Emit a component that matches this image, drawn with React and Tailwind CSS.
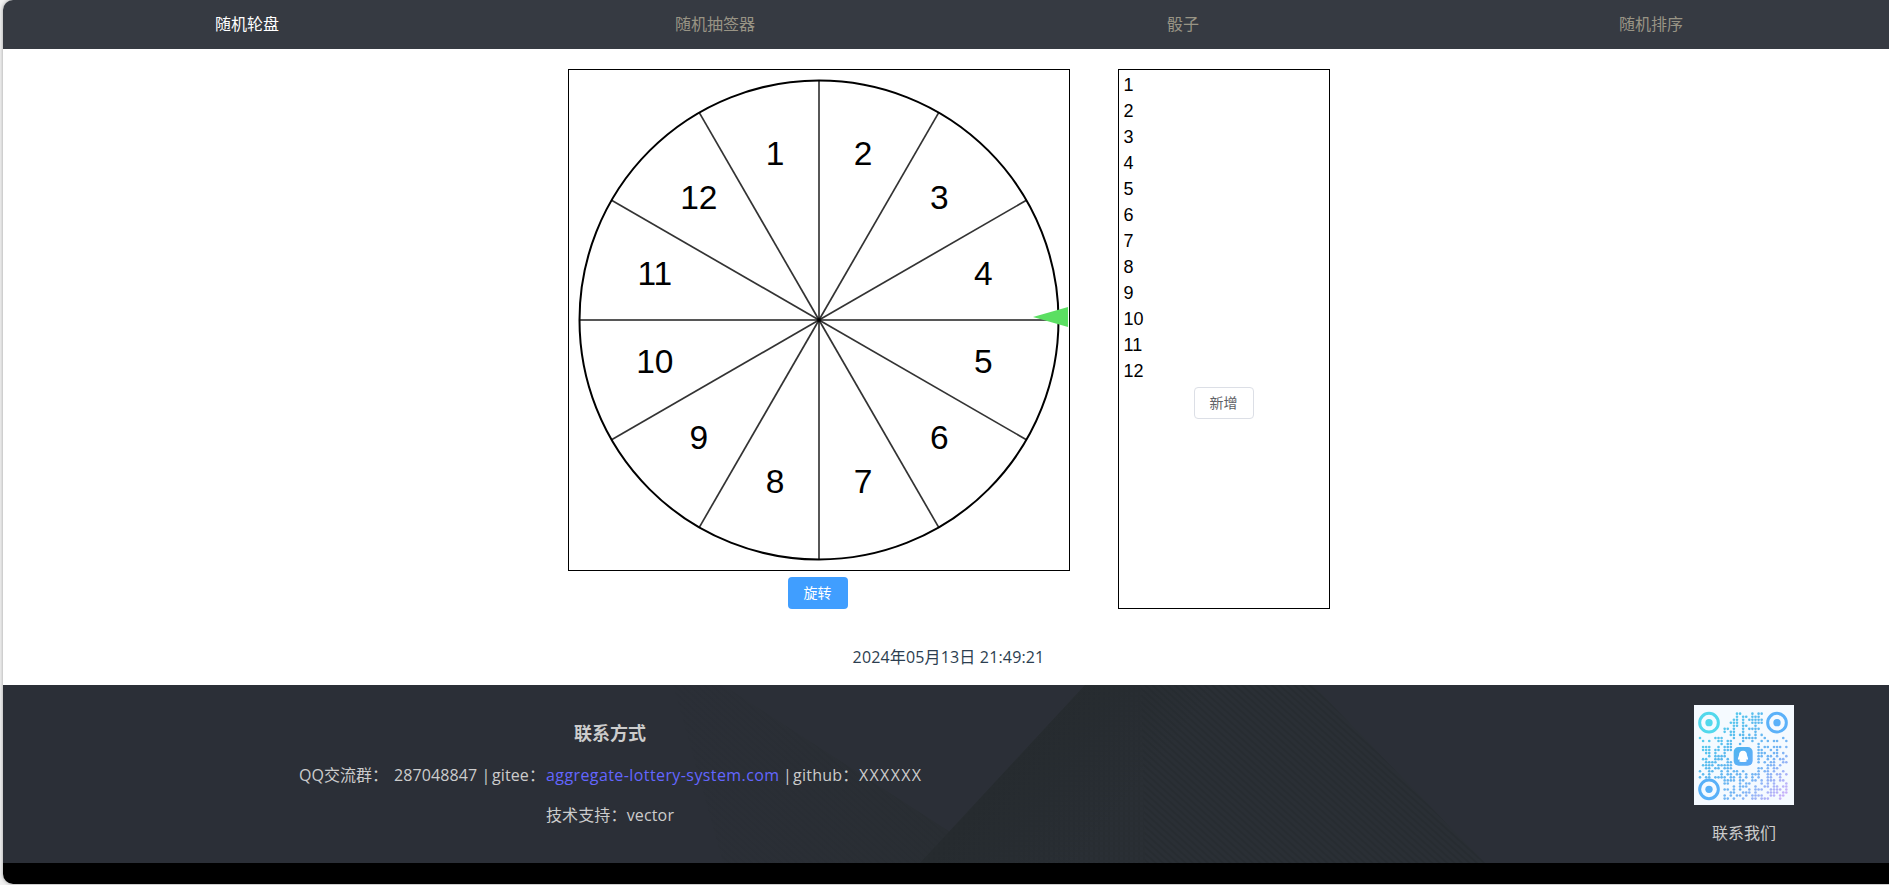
import React from "react";

const NAV = ["随机轮盘", "随机抽签器", "骰子", "随机排序"];
const ITEMS = Array.from({ length: 12 }, (_, i) => String(i + 1));

function Wheel() {
  const c = 250;
  const rad = (deg) => (deg * Math.PI) / 180;
  return (
    <svg viewBox="0 0 500 500" className="block h-[500px] w-[500px]">
      <circle cx={c} cy={c} r="239.5" fill="none" stroke="#000" strokeWidth="2" />
      {ITEMS.map((label, i) => (
        <line
          key={label}
          x1={c}
          y1={c}
          x2={c + 240 * Math.cos(rad(i * 30))}
          y2={c + 240 * Math.sin(rad(i * 30))}
          stroke="#000"
          strokeOpacity={i % 3 === 0 ? 0.66 : 0.8}
          strokeWidth={i % 3 === 0 ? 2 : 1.7}
        />
      ))}
      {ITEMS.map((label, i) => (
        <text
          key={label}
          x={c + 170 * Math.cos(rad(i * 30 - 105))}
          y={c + 170 * Math.sin(rad(i * 30 - 105)) + 9}
          textAnchor="middle"
          fontSize="33.5"
          fontFamily='"Liberation Sans", Arial, sans-serif'
        >
          {label}
        </text>
      ))}
      <path d="M464 247 L499 237 V257 Z" fill="#5bdf62" />
    </svg>
  );
}

const QR_ROWS = [
  "............##...#.##........",
  "............#.##.###.........",
  "...........##.#.#####........",
  "..........###.#..####........",
  "...........##.##..#..........",
  "........##.#..#.####.........",
  "........#.##..#...#..........",
  "..........##.##.#.#.#........",
  "#....###...#..#####..#.....#.",
  ".#.#..##.##...#..#..#.#.##..#",
  ".......#.##..#.....#.........",
  ".###..#.###........#.##.###.#",
  ".###.##.###........##..#.#...",
  "..##.#..#..........###..##.#.",
  "...#.####..........##.##.#..#",
  ".##..###.#.........#..#.#.##.",
  "..####...##........#.#.##..##",
  ".####.#####...........###.#..",
  "..##.##.###........##.#.##...",
  "#..##..#.#.##.#....#.##.#..#.",
  ".#.#...#.##.##.#.###..##.##.#",
  "#.##.####.##.#.#.#.#..##..#..",
  "........####.##..##.#.###.##.",
  "........##...#.##...#.#.#...#",
  "...........#.###..#..##.##.##",
  "........##.#.#..#.###..####.#",
  "..........##..###.#...####.##",
  "........#.#.##.#.####..##.##.",
  "........##.#..#..##.###...#..",
];

function QrCode() {
  const p = 9.25;
  const dots = [];
  QR_ROWS.forEach((row, r) => {
    row.split("").forEach((ch, col) => {
      if (ch === "#") {
        dots.push(<circle key={`${r}-${col}`} cx={18 + col * p} cy={26 + r * 9.1} r="3.9" />);
      }
    });
  });
  return (
    <svg viewBox="0 0 300 300" className="block h-[100px] w-[100px] bg-[#f5faff]">
      <defs>
        <linearGradient id="qr" gradientUnits="userSpaceOnUse" x1="15" y1="20" x2="280" y2="280">
          <stop offset="0" stopColor="#4fdcec" />
          <stop offset="0.4" stopColor="#5cb8ee" />
          <stop offset="0.68" stopColor="#74b4f4" />
          <stop offset="1" stopColor="#d3b0fa" />
        </linearGradient>
        <linearGradient id="badge" x1="0" y1="0" x2="1" y2="1">
          <stop offset="0" stopColor="#4eb6ef" />
          <stop offset="1" stopColor="#63acfa" />
        </linearGradient>
      </defs>
      <g fill="url(#qr)">{dots}</g>
      {[
        [45, 53, "#52d8ec"],
        [249, 53, "#5bb1f9"],
        [45, 253, "#58b0f8"],
      ].map(([x, y, color]) => (
        <g key={`${x}-${y}`}>
          <circle cx={x} cy={y} r="28" fill="none" stroke={color} strokeWidth="9" />
          <circle cx={x} cy={y} r="11" fill={color} />
        </g>
      ))}
      <rect x="119" y="126" width="57" height="56" rx="15" fill="url(#badge)" />
      <path
        d="M147 137c-8 0-12 6-12 14l-3 9c-1 4 1 6 4 3l1 3c-3 4 0 5 4 5h12c4 0 7-1 4-5l1-3c3 3 5 1 4-3l-3-9c0-8-4-14-12-14z"
        fill="#fff"
      />
    </svg>
  );
}

function FooterPattern() {
  return (
    <svg viewBox="0 0 1886 178" className="absolute inset-0 h-[178px] w-[1886px]">
      <defs>
        <pattern id="diag" width="8" height="5" patternUnits="userSpaceOnUse" patternTransform="rotate(42)">
          <rect width="8" height="2" fill="#24292d" />
        </pattern>
        <pattern id="vert" width="5" height="5" patternUnits="userSpaceOnUse">
          <rect width="2" height="5" fill="#24292d" />
          <rect width="5" height="2" fill="#262b2f" />
        </pattern>
        <linearGradient id="edge" x1="0" y1="0" x2="1" y2="0">
          <stop offset="0" stopColor="#282d31" stopOpacity="0" />
          <stop offset="1" stopColor="#282d31" stopOpacity="0.7" />
        </linearGradient>
        <linearGradient id="fold" gradientUnits="userSpaceOnUse" x1="1000" y1="89" x2="1090" y2="160">
          <stop offset="0" stopColor="#262b2f" />
          <stop offset="1" stopColor="#2a2f35" />
        </linearGradient>
      </defs>
      <path d="M670 0 L720 0 L955 152 L930 178 L720 178 Z" fill="url(#edge)" />
      <path d="M670 0 L720 0 L955 152 L930 178 L720 178 Z" fill="url(#diag)" opacity="0.15" />
      <path d="M1082 0 H1310 L1482 178 H917 Z" fill="url(#fold)" />
      <path d="M1138 0 H1310 L1482 178 H1142 Z" fill="url(#diag)" opacity="0.5" />
      <path d="M1082 0 H1138 L1142 178 H917 Z" fill="url(#vert)" opacity="0.35" />
    </svg>
  );
}

export default function App() {
  return (
    <div className="h-[885px] w-full overflow-hidden bg-[#f2f2f2] pl-[3px] font-['Open_Sans','Noto_Sans_CJK_SC',sans-serif] text-base">
      <div className="flex h-[884px] w-[1892px] flex-col overflow-hidden rounded-l-[10px] bg-white shadow-[0_0_4px_rgba(0,0,0,0.35)]">
        <nav className="grid h-[49px] shrink-0 grid-cols-4 items-center bg-[#363a42] px-[10px] pb-[2px]">
          {NAV.map((name, i) => (
            <a
              key={name}
              className={`text-center leading-6 ${i === 0 ? "text-white" : "text-[#999485]"}`}
            >
              {name}
            </a>
          ))}
        </nav>

        <main className="flex h-[636px] shrink-0 flex-col items-center pt-5">
          <div className="flex gap-12">
            <section className="flex w-[502px] flex-col items-center">
              <div className="border border-black">
                <Wheel />
              </div>
              <button className="mt-1.5 mr-[2px] h-8 w-[60px] rounded bg-[#409eff] pr-px text-sm text-white">
                旋转
              </button>
            </section>
            <section className="flex h-[540px] w-[212px] flex-col items-center border border-black pt-[2px]">
              <ul className="w-full pl-[4.5px] font-['Liberation_Sans',Arial,sans-serif] text-lg leading-[26px] text-black">
                {ITEMS.map((n) => (
                  <li key={n}>{n}</li>
                ))}
              </ul>
              <button className="mt-[3px] h-8 w-[60px] rounded border border-[#dcdfe6] bg-white pr-px text-sm text-[#606266]">
                新增
              </button>
            </section>
          </div>
          <p className="mt-9 pr-px leading-6 tracking-[0.16px] text-[#2c3e50]">2024年05月13日 21:49:21</p>
        </main>

        <footer className="relative h-[178px] shrink-0 bg-[#2b2f37] text-[#cccccc]">
          <FooterPattern />
          <div className="relative flex h-full">
            <div className="flex w-[1214px] flex-col items-center pt-[36px]">
              <h3 className="text-lg leading-6 font-bold">联系方式</h3>
              <p className="mt-[18px] flex leading-6 whitespace-pre">
                <span className="w-[95px]">QQ交流群：</span>
                <span className="w-[98px] tracking-[0.1px]">287048847 | </span>
                <span className="w-[54px] tracking-[0.1px]">gitee：</span>
                <a className="w-[237px] tracking-[0.41px] text-[#6366ff]">aggregate-lottery-system.com</a>
                <span className="w-[10px]">|</span>
                <span className="w-[66px] tracking-[0.25px]">github：</span>
                <span className="w-[62px] tracking-[1.3px]">XXXXXX</span>
              </p>
              <p className="mt-4 leading-6 tracking-[0.15px]">技术支持：vector</p>
            </div>
            <div className="ml-[427px] flex w-[200px] flex-col items-center pt-5">
              <QrCode />
              <span className="mt-4 leading-6">联系我们</span>
            </div>
          </div>
        </footer>
        <div className="h-[21px] shrink-0 bg-black" />
      </div>
    </div>
  );
}
